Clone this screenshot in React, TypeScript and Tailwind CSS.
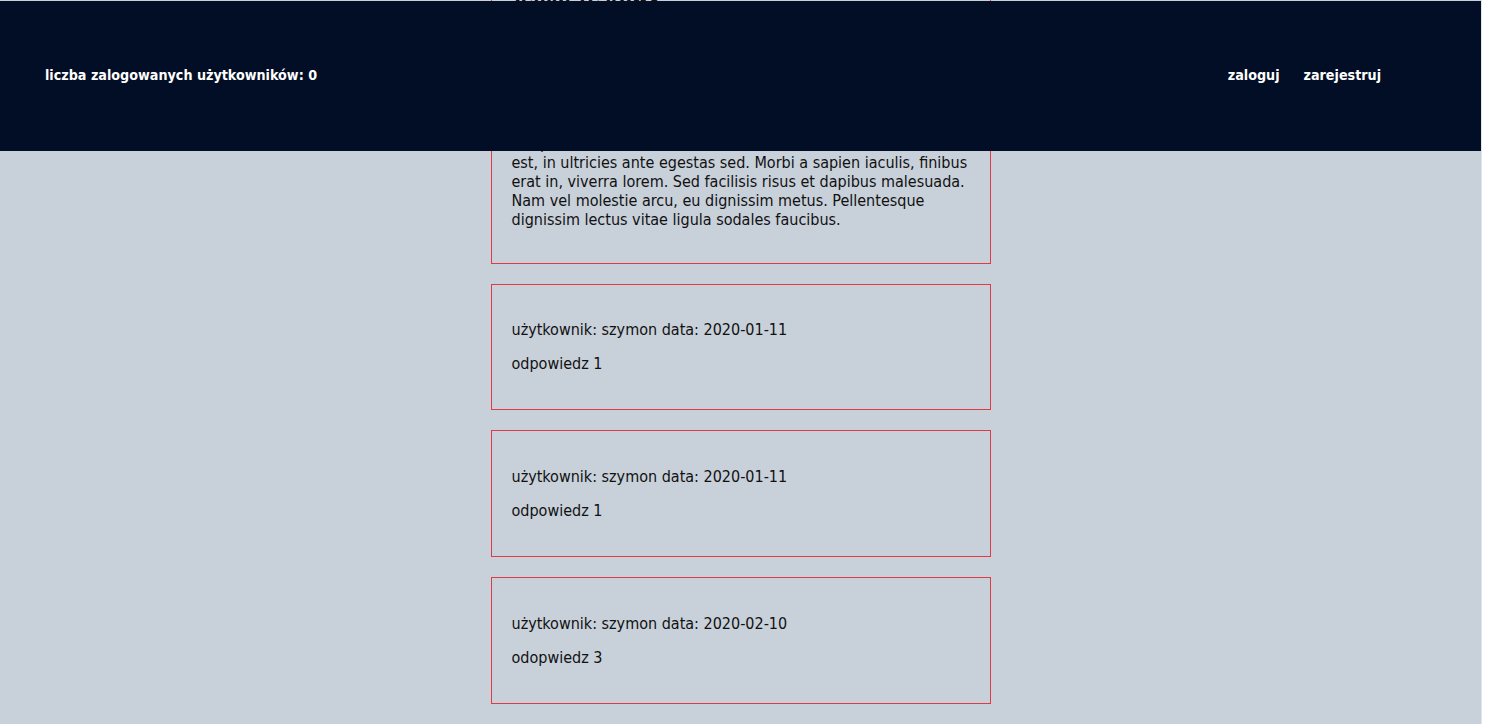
const replies = [
  { user: 'szymon', date: '2020-01-11', text: 'odpowiedz 1' },
  { user: 'szymon', date: '2020-01-11', text: 'odpowiedz 1' },
  { user: 'szymon', date: '2020-02-10', text: 'odopwiedz 3' },
];

// first post is written line by line so the breaks match the original
const postLines = [
  'Lorem ipsum dolor sit amet, consectetur adipiscing elit. Nulla',
  'facilisi. Vivamus sed tortor non nisl pulvinar tempor. Integer',
  'vel mauris quis nunc tincidunt varius. Donec quis sagittis',
  'purus, at elementum ex. Curabitur consequat, lacus quis tempus',
  'est, in ultricies ante egestas sed. Morbi a sapien iaculis, finibus',
  'erat in, viverra lorem. Sed facilisis risus et dapibus malesuada.',
  'Nam vel molestie arcu, eu dignissim metus. Pellentesque',
  'dignissim lectus vitae ligula sodales faucibus.',
];

export default function App() {
  return (
    <div className="h-[724px] flex overflow-hidden font-['DejaVu_Sans_Condensed','DejaVu_Sans',sans-serif] text-[#111111]">
      <div className="relative w-[1481px] h-full bg-[#c8d0da] overflow-hidden">
        {/* page content, scrolled to the bottom */}
        <main className="h-full flex flex-col items-center justify-end pb-[20px]">
          <div className="flex flex-col gap-[20px]">
            <div className="w-[500px] border border-[#de3b44] px-[20px] pt-[36px] pb-[34px] text-[16px] leading-[19px]">
              <h2 className="text-[20px] leading-[24px] font-bold mb-[15px]">Temat testowy</h2>
              <p className="mb-[15px]">użytkownik: szymon data: 2020-01-10</p>
              {postLines.map((line, i) => (
                <div key={i}>{line}</div>
              ))}
            </div>
            {replies.map((r, i) => (
              <div
                key={i}
                className={`w-[500px] border border-[#de3b44] px-[20px] pb-[36px] text-[16px] leading-[19px] flex flex-col gap-[15px] ${i === 0 ? 'pt-[35px]' : 'pt-[36px]'}`}
              >
                <p>
                  użytkownik: {r.user} data: {r.date}
                </p>
                <p>{r.text}</p>
              </div>
            ))}
          </div>
        </main>

        {/* fixed top bar */}
        <header className="absolute top-[1px] left-0 right-0 h-[150px] bg-[#020e25] text-white flex items-center justify-between pl-[45px] pr-[100px] text-[14.2px] font-bold">
          <span>liczba zalogowanych użytkowników: 0</span>
          <nav className="flex gap-[24px]">
            <a href="#">zaloguj</a>
            <a href="#">zarejestruj</a>
          </nav>
        </header>
      </div>
      <div className="flex-1 h-full bg-white border-l border-[#dfe4ea]" />
    </div>
  );
}
